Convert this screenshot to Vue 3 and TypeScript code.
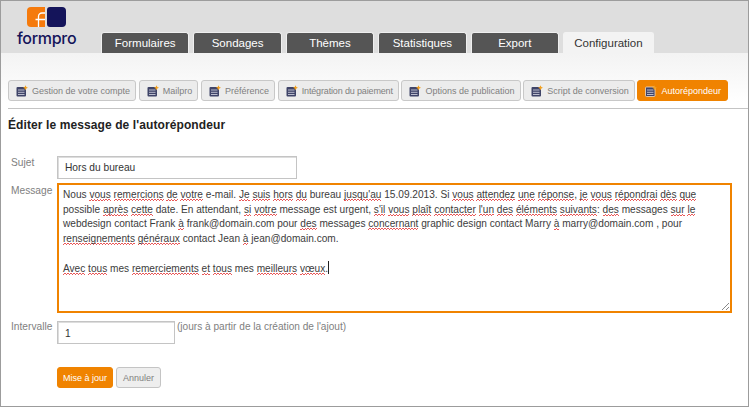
<script setup lang="ts">
type Seg = { t: string; e?: boolean }
const parse = (s: string): Seg[] =>
  s.split(/(\[[^\]]+\])/).filter(Boolean).map((p) =>
    p.startsWith('[') ? { t: p.slice(1, -1), e: true } : { t: p }
  )
const tabs = ['Formulaires', 'Sondages', 'Thèmes', 'Statistiques', 'Export', 'Configuration']
const subs = [
  'Gestion de votre compte',
  'Mailpro',
  'Préférence',
  'Intégration du paiement',
  'Options de publication',
  'Script de conversion',
  'Autorépondeur',
]
const lines = [
  "Nous [vous] [remercions] [de] [votre] e-mail. [Je] [suis] [hors] [du] bureau [jusqu'au] 15.09.2013. Si [vous] [attendez] [une] [réponse], [je] [vous] [répondrai] [dès] [que]",
  "possible [après] [cette] date. En attendant, [si] [votre] message est urgent, [s'il] [vous] [plaît] [contacter] [l'un] [des] [éléments] [suivants]: [des] messages [sur] [le]",
  "webdesign contact Frank [à] frank@domain.com pour [des] messages [concernant] graphic design contact Marry [à] marry@domain.com , pour",
  "[renseignements] [généraux] contact Jean [à] jean@domain.com.",
  '',
  '[Avec] [tous] mes [remerciements] [et] [tous] mes [meilleurs] [vœux].',
].map(parse)
</script>

<template>
  <div class="frame">
    <header class="top">
      <div class="brand">
        <svg class="mark" width="40" height="20" viewBox="0 0 40 20">
          <path d="M4 0H18V20H4a4 4 0 0 1-4-4V4a4 4 0 0 1 4-4Z" fill="#f57a0c" />
          <path d="M20 3a3 3 0 0 1 3-3H35a4 4 0 0 1 4 4V16a4 4 0 0 1-4 4H23a3 3 0 0 1-3-3Z" fill="#14145a" />
          <path d="M11.500 20V9.500a3.500 3.500 0 0 1 3.500-3.500H18M8.500 12.500H18" fill="none" stroke="#fff" stroke-width="1.300" />
        </svg>
        <div class="word">formpro</div>
      </div>
      <nav class="tabs">
        <div v-for="(t, i) in tabs" :key="t" class="tab" :class="{ on: i === 5 }">{{ t }}</div>
      </nav>
    </header>

    <main class="body">
      <div class="subs">
        <div v-for="(s, i) in subs" :key="s" class="sub" :class="{ on: i === 6, tight: i === 3 }">
          <svg class="ic" width="12" height="12" viewBox="0 0 12 12">
            <rect x="0.500" y="2" width="9.500" height="9.500" rx="1" fill="#3f4468" :stroke="i === 6 ? '#f3ddc4' : 'none'" stroke-width="0.800" />
            <path d="M2 5h6.500M2 7.300h6.500M2 9.500h6.500" stroke="#c8cad8" stroke-width="0.900" />
            <path d="M9.500 0.300l.8 1.700 1.700.8-1.700.8-.8 1.700-.8-1.700-1.700-.8 1.700-.8Z" fill="#f2a01e" />
          </svg>
          <span>{{ s }}</span>
        </div>
      </div>

      <h1 class="title">Éditer le message de l'autorépondeur</h1>

      <div class="row subject">
        <label class="lab">Sujet</label>
        <div class="field f-subject">Hors du bureau</div>
      </div>

      <div class="row message">
        <label class="lab">Message</label>
        <div class="area">
          <div v-for="(l, i) in lines" :key="i" class="line">
            <template v-for="(seg, j) in l" :key="j"><span v-if="seg.e" class="err">{{ seg.t }}</span><template v-else>{{ seg.t }}</template></template>
            <span v-if="i === 5" class="caret"></span>
          </div>
          <svg class="grip" width="9" height="9" viewBox="0 0 9 9">
            <path d="M1 8L8 1M5 8L8 5" stroke="#888" stroke-width="1" />
          </svg>
        </div>
      </div>

      <div class="row interval">
        <label class="lab">Intervalle</label>
        <div class="field f-int">1</div>
        <span class="note">(jours à partir de la création de l'ajout)</span>
      </div>

      <div class="actions">
        <button class="btn save" type="button">Mise à jour</button>
        <button class="btn cancel" type="button">Annuler</button>
      </div>
    </main>
  </div>
</template>

<style>
html, body { margin: 0; background: #fff; }
</style>

<style scoped>
.frame {
  width: 749px;
  height: 407px;
  box-sizing: border-box;
  border: 1px solid #9c9c9c;
  font-family: "Liberation Sans", Arial, sans-serif;
  overflow: hidden;
  display: flex;
  flex-direction: column;
  background: #fff;
}
.top {
  height: 52px;
  flex: none;
  background: #dedede;
  display: flex;
  align-items: flex-end;
}
.brand {
  width: 100px;
  height: 52px;
  flex: none;
  box-sizing: border-box;
  padding: 6px 0 0 16px;
}
.mark { display: block; margin-left: 10px; }
.word {
  font-family: Inter, sans-serif;
  font-size: 16px;
  font-weight: 500;
  line-height: 20px;
  color: #14145a;
  margin-top: 1px;
  letter-spacing: -0.300px;
}
.tabs {
  display: flex;
  gap: 4px;
}
.tab {
  width: 88.400px;
  height: 21px;
  box-sizing: border-box;
  border: 1px solid #efefef;
  border-bottom: 0;
  border-radius: 3px 3px 0 0;
  background: #555;
  color: #fff;
  font-size: 11.500px;
  line-height: 21px;
  text-align: center;
}
.tab.on {
  width: 91px;
  background: #f3f3f3;
  border-color: #f3f3f3;
  color: #333;
}
.body {
  flex: 1;
  background: linear-gradient(#f3f3f3, #fff 50px);
  padding: 27px 0 0 7px;
  min-height: 0;
}
.subs {
  display: flex;
  gap: 2.700px;
  height: 29px;
  box-sizing: border-box;
  border-bottom: 1px solid #c4c4c4;
  align-items: flex-start;
}
.sub {
  height: 21px;
  box-sizing: border-box;
  display: flex;
  align-items: center;
  gap: 4px;
  padding: 0 5px 0 7px;
  border: 1px solid #c8c8c8;
  border-radius: 3px;
  background: #ececec;
  color: #808080;
  font-size: 9px;
  white-space: nowrap;
}
.sub.tight { letter-spacing: -0.150px; }
.sub.on {
  padding-right: 6px;
  background: #f08300;
  border-color: #f08300;
  color: #fff;
}
.ic { flex: none; }
.title {
  margin: 9px 0 0;
  font-size: 12px;
  line-height: 15px;
  font-weight: bold;
  color: #222;
  letter-spacing: 0.100px;
}
.row { display: flex; }
.lab {
  width: 49px;
  flex: none;
  box-sizing: border-box;
  padding-left: 3px;
  font-size: 10.200px;
  color: #808080;
}
.subject { margin-top: 23px; }
.subject .lab { padding-top: 1px; }
.field {
  box-sizing: border-box;
  border: 1px solid #c4c4c4;
  box-shadow: inset 1px 1px 0 #ddd;
  background: #fff;
  color: #333;
  font-size: 10.200px;
  padding-left: 7px;
}
.f-subject { width: 240px; height: 23px; line-height: 21px; }
.message { margin-top: 4px; }
.message .lab { padding-top: 2px; }
.area {
  position: relative;
  width: 675px;
  height: 130px;
  box-sizing: border-box;
  border: 2px solid #f08300;
  padding: 3px 0 0 4px;
  font-size: 10.120px;
  line-height: 14.700px;
  color: #3c3c3c;
  white-space: nowrap;
}
.line { height: 14.700px; }
.err {
  padding-bottom: 1px;
  background-image:
    repeating-linear-gradient(90deg, #e85858 0 1.500px, transparent 1.500px 3px),
    repeating-linear-gradient(90deg, transparent 0 1.500px, #e85858 1.500px 3px);
  background-size: 100% 1px, 100% 1px;
  background-position: 0 100%, 0 calc(100% - 1px);
  background-repeat: no-repeat;
}
.caret {
  display: inline-block;
  width: 1px;
  height: 13px;
  background: #222;
  vertical-align: -2px;
}
.grip { position: absolute; right: 0; bottom: 0; }
.interval { margin-top: 8px; }
.f-int { width: 118px; height: 23px; line-height: 23px; }
.note {
  margin-left: 2px;
  font-size: 10.100px;
  color: #808080;
}
.actions {
  display: flex;
  gap: 3px;
  margin: 23px 0 0 49px;
}
.btn {
  height: 21px;
  margin: 0;
  padding: 0;
  border-radius: 3px;
  font: 9px "Liberation Sans", Arial, sans-serif;
}
.save {
  width: 56px;
  border: 1px solid #f08300;
  background: #f08300;
  color: #fff;
}
.cancel {
  width: 45px;
  border: 1px solid #c4c4c4;
  background: #eee;
  color: #808080;
}
</style>
